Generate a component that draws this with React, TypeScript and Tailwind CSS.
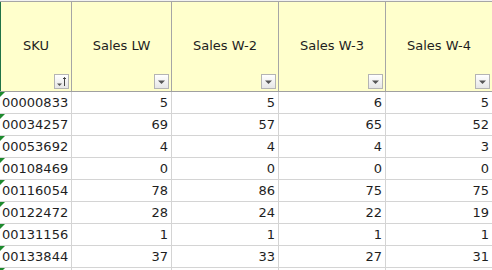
const headers = ['SKU', 'Sales LW', 'Sales W-2', 'Sales W-3', 'Sales W-4'];

const rows: [string, number, number, number, number][] = [
  ['00000833', 5, 5, 6, 5],
  ['00034257', 69, 57, 65, 52],
  ['00053692', 4, 4, 4, 3],
  ['00108469', 0, 0, 0, 0],
  ['00116054', 78, 86, 75, 75],
  ['00122472', 28, 24, 22, 19],
  ['00131156', 1, 1, 1, 1],
  ['00133844', 37, 33, 27, 31],
];

const cols = 'grid grid-cols-[72px_100px_107px_107px_107px]';

function FilterButton({ sorted }: { sorted?: boolean }) {
  return (
    <div className="absolute right-[2px] bottom-[2px] w-[15px] h-[15px] border border-[#b4b4b4] bg-gradient-to-b from-white to-[#e6e6e6] flex items-center justify-center">
      {sorted ? (
        <svg width="13" height="13" viewBox="0 0 13 13">
          <path d="M2 8.5h5l-2.5 2.5z" fill="#555" />
          <path d="M9.5 2.5v8.5M8 4l1.5-1.5 1.5 1.5" stroke="#444" strokeWidth="1" fill="none" />
        </svg>
      ) : (
        <svg width="9" height="6" viewBox="0 0 9 6">
          <path d="M1 1.5h7l-3.5 3.5z" fill="#555" />
        </svg>
      )}
    </div>
  );
}

export default function App() {
  return (
    <div
      className="w-[492px] h-[270px] overflow-hidden bg-white text-[13px] text-[#1e1e1e]"
      style={{ fontFamily: '"DejaVu Sans", Verdana, sans-serif' }}
    >
      {/* column header strip cut off at top */}
      <div className="h-[2px] bg-[#f2f2f2] border-b border-[#a6a6a6]" />

      {/* table header */}
      <div className={`${cols} h-[90px] border-b border-[#a0a0a0]`}>
        {headers.map((h, i) => (
          <div
            key={h}
            className={`relative bg-[#ffffcc] border-r border-[#a6a6a6] flex items-center justify-center ${
              i === 0 ? 'border-l border-l-[#217346]' : ''
            }`}
          >
            <span className="-mt-[2px]">{h}</span>
            <FilterButton sorted={i === 0} />
          </div>
        ))}
      </div>

      {/* body rows */}
      {rows.map(([sku, ...vals]) => (
        <div key={sku} className={`${cols} h-[22px] border-b border-[#d4d4d4]`}>
          <div className="relative border-r border-[#d4d4d4] pl-[2px] flex items-center">
            <span className="absolute left-0 top-0 w-0 h-0 border-t-[5px] border-t-[#1e8a2e] border-r-[5px] border-r-transparent" />
            {sku}
          </div>
          {vals.map((v, j) => (
            <div key={j} className="border-r border-[#d4d4d4] pr-[3px] flex items-center justify-end">
              {v}
            </div>
          ))}
        </div>
      ))}

      {/* partial next row */}
      <div className={`${cols} h-[22px]`}>
        <div className="relative border-r border-[#d4d4d4]">
          <span className="absolute left-0 top-0 w-0 h-0 border-t-[5px] border-t-[#1e8a2e] border-r-[5px] border-r-transparent" />
        </div>
        <div className="border-r border-[#d4d4d4]" />
        <div className="border-r border-[#d4d4d4]" />
        <div className="border-r border-[#d4d4d4]" />
        <div className="border-r border-[#d4d4d4]" />
      </div>
    </div>
  );
}
